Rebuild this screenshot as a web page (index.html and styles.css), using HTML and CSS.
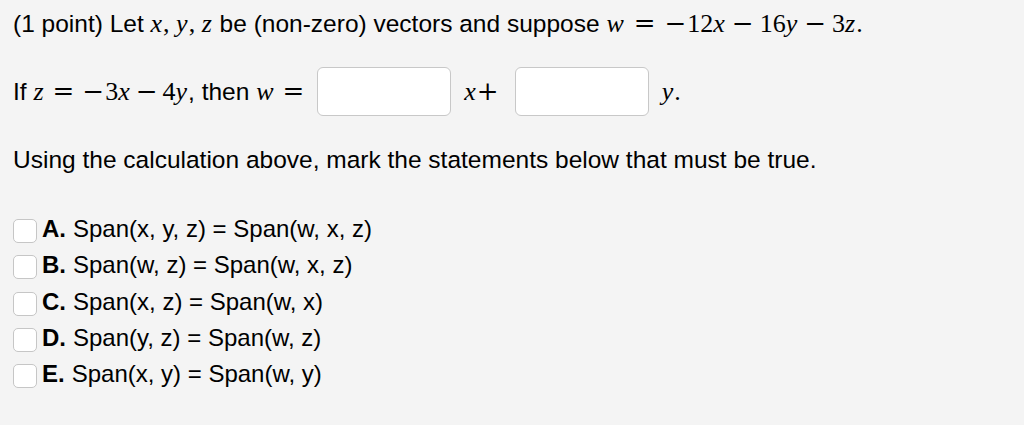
FILE: index.html
```html
<!DOCTYPE html>
<html>
<head>
<meta charset="utf-8">
<link rel="stylesheet" href="styles.css">
</head>
<body>
<div class="page">
  <p class="line first">(1 point) Let <span class="m"><i>x</i>, <i>y</i>, <i>z</i></span> be (non-zero) vectors and suppose <span class="m"><i>w</i><span class="mo rel">=</span><span class="mo un">−</span>12<i>x</i><span class="mo bin">−</span>16<i>y</i><span class="mo bin">−</span>3<i>z</i>.</span></p>
  <div class="line eq">
    <span>If <span class="m"><i>z</i><span class="mo rel">=</span><span class="mo un">−</span>3<i>x</i><span class="mo bin">−</span>4<i>y</i></span>, then <span class="m"><i>w</i><span class="mo rel end">=</span></span></span>
    <span class="box"></span>
    <span class="m xp"><i>x</i><span class="mo">+</span></span>
    <span class="box"></span>
    <span class="m"><i>y</i>.</span>
  </div>
  <p class="line using">Using the calculation above, mark the statements below that must be true.</p>
  <ul class="opts">
    <li><span class="cb"></span><b>A.</b> Span(x, y, z) = Span(w, x, z)</li>
    <li><span class="cb"></span><b>B.</b> Span(w, z) = Span(w, x, z)</li>
    <li><span class="cb"></span><b>C.</b> Span(x, z) = Span(w, x)</li>
    <li><span class="cb"></span><b>D.</b> Span(y, z) = Span(w, z)</li>
    <li><span class="cb"></span><b>E.</b> Span(x, y) = Span(w, y)</li>
  </ul>
</div>
</body>
</html>
```
FILE: styles.css
```css
html, body { margin: 0; padding: 0; background: #f4f4f4; }
body { font-family: "Liberation Sans", Arial, sans-serif; font-size: 24px; color: #000; width: 1024px; height: 425px; overflow: hidden; }
.page { padding: 9px 13px 0; }
.line { margin: 0; line-height: 28px; }
.first { font-size: 24.5px; }
.m { font-family: "Liberation Serif", "Times New Roman", serif; font-size: 26px; }
.m i { font-style: italic; padding-right: 1px; }
.mo { font-family: "DejaVu Serif", serif; font-size: 26px; font-style: normal; }
.mo.rel { margin: 0 8px; }
.mo.bin { margin: 0 5px; }
.first .mo.rel { margin: 0 9px; }
.first .mo.bin { margin: 0 6px; }
.mo.un { margin-right: 1px; }
.mo.end { margin-right: 0; }
.eq { display: flex; align-items: center; margin-top: 29px; height: 49px; font-size: 24.5px; }
.box { display: inline-block; box-sizing: border-box; width: 134px; height: 49px; background: #fff; border: 1px solid #c8c8c8; border-radius: 6px; margin: 0 13px; flex: none; }
.xp { margin-right: 3px; }
.using { margin-top: 30px; font-size: 24.5px; }
.opts { list-style: none; margin: 37px 0 0; padding: 0; }
.opts li { display: flex; align-items: center; height: 36.25px; line-height: 28px; }
.cb { display: inline-block; box-sizing: border-box; width: 24px; height: 24px; background: #fff; border: 1px solid #c6c6c6; border-radius: 5px; margin: 4px 5px 0 0; flex: none; }
.opts b { margin-right: 7px; }
```
